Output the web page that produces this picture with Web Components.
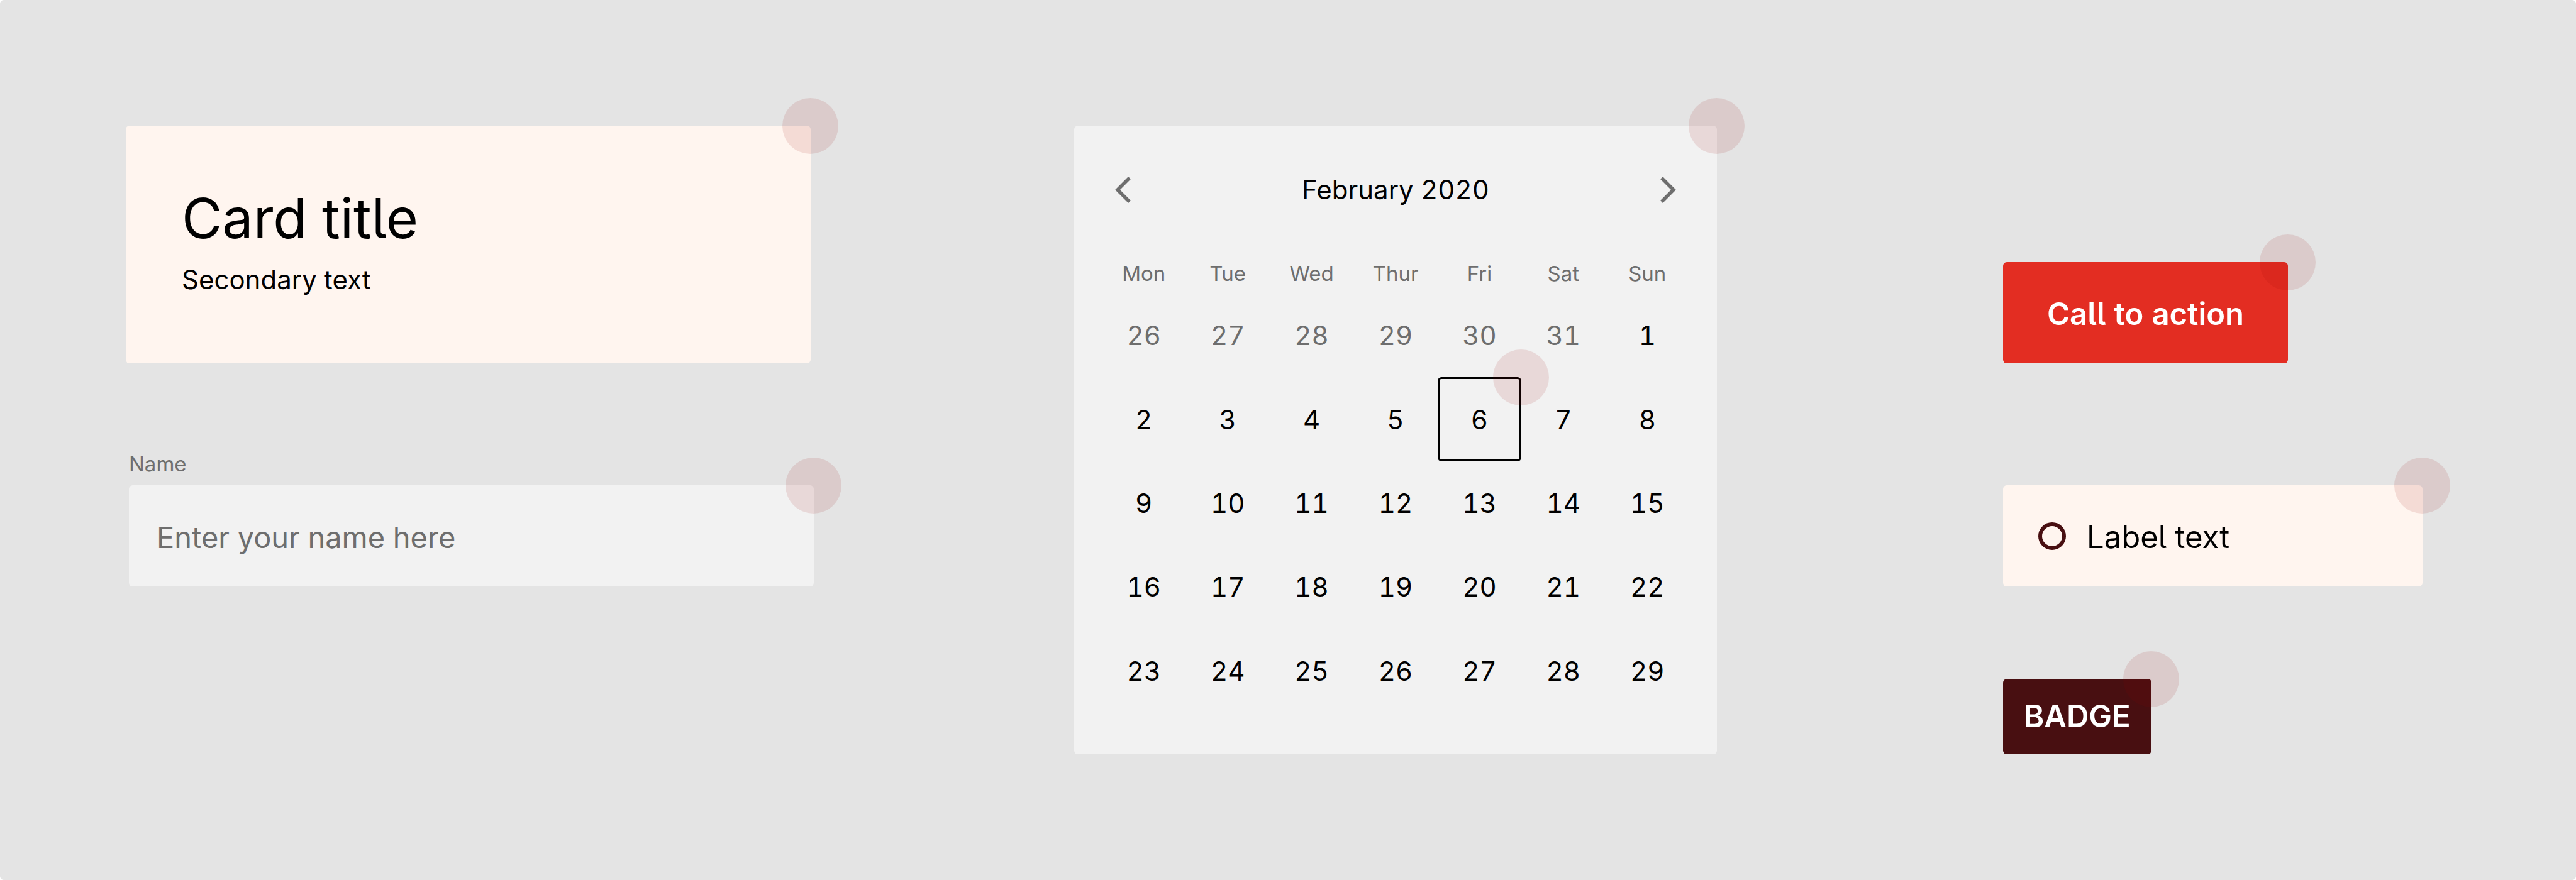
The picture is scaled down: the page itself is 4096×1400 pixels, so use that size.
<!DOCTYPE html>
<html lang="en">
<head>
<meta charset="utf-8">
<title>Corner radius</title>
<style>
  html { background: #fff; }
  body {
    margin: 0;
    font-family: Inter, "Liberation Sans", sans-serif;
    font-feature-settings: "cv05", "tnum";
    color: #000;
    --paper: #fff5ef;
    --surface: #f2f2f2;
    --canvas: #e4e4e4;
    --muted: #6e6e6e;
    --accent: #e32d22;
    --deep: #480f11;
    --radius: 6px;
    --size-s: 33px;
    --size-m: 42px;
    --size-input: 47px;
    --size-l: 49px;
    --size-xl: 88px;
  }
</style>
</head>
<body>
<ui-board>
  <ui-stack slot="forms">
    <ui-card><span slot="title">Card title</span>Secondary text</ui-card>
    <ui-field label="Name" placeholder="Enter your name here"></ui-field>
  </ui-stack>
  <ui-calendar slot="calendar" month="February 2020"></ui-calendar>
  <ui-stack slot="actions">
    <ui-button>Call to action</ui-button>
    <ui-radio>Label text</ui-radio>
    <ui-badge>BADGE</ui-badge>
  </ui-stack>
</ui-board>
<script>
const define = (name, html, setup) => {
  const template = document.createElement('template');
  template.innerHTML = '<style>*{box-sizing:border-box}</style>' + html;
  customElements.define(name, class extends HTMLElement {
    constructor() {
      super();
      this.attachShadow({ mode: 'open' }).append(template.content.cloneNode(true));
    }
    connectedCallback() { if (setup) setup(this, this.shadowRoot); }
  });
};

/* Translucent disc centred on the top right corner of its parent. */
define('corner-spot', `
  <style>
    :host { position: absolute; top: -44px; right: -44px; width: 89px; height: 89px;
      border-radius: 50%; background: rgb(150 0 0 / .105); pointer-events: none; z-index: 1; }
  </style>`);

define('ui-board', `
  <style>
    :host { display: grid; box-sizing: border-box; min-height: 100vh; align-items: start;
      grid-template-columns: 1094fr 414fr 1022fr 455fr 667fr;
      padding: 200px 244px 200px 200px; background: var(--canvas); border-radius: var(--radius); }
    slot[name=calendar]::slotted(*) { grid-column: 3; }
    slot[name=actions]::slotted(*) { grid-column: 5; padding-top: 217px; }
  </style>
  <slot name="forms"></slot><slot name="calendar"></slot><slot name="actions"></slot>`);

define('ui-stack', `
  <style>:host { display: flex; flex-direction: column; }</style>
  <slot></slot>`);

define('ui-card', `
  <style>
    :host { display: block; position: relative; margin-right: 5px; padding: 95px 89px 101px;
      background: var(--paper); border-radius: var(--radius); }
    h2 { margin: 0 0 14px; font-size: var(--size-xl); line-height: 104px; font-weight: 400; }
    p { margin: 0; font-size: var(--size-m); line-height: 64px; }
  </style>
  <h2><slot name="title"></slot></h2>
  <p><slot></slot></p>
  <corner-spot></corner-spot>`);

define('ui-field', `
  <style>
    :host { display: block; margin: 140px 0 0 5px; }
    label { display: block; margin-bottom: 14px; font-size: var(--size-s); line-height: 40px; color: var(--muted); }
    .box { position: relative; }
    input { display: block; width: 100%; height: 161px; padding: 4px 44px 0; border: 0;
      border-radius: var(--radius); background: var(--surface); color: #000;
      font: inherit; font-feature-settings: inherit; font-size: var(--size-input); }
    input::placeholder { color: var(--muted); opacity: 1; }
  </style>
  <label for="control"></label>
  <div class="box"><input id="control" type="text"><corner-spot></corner-spot></div>`,
  (host, root) => {
    root.querySelector('label').textContent = host.getAttribute('label');
    root.querySelector('input').placeholder = host.getAttribute('placeholder');
  });

define('ui-calendar', `
  <style>
    :host { display: block; position: relative; padding: 0 44px 66px;
      background: var(--surface); border-radius: var(--radius); }
    header { display: flex; align-items: center; justify-content: space-between; height: 203px; padding: 0 21px; }
    h3 { margin: 0; font-size: var(--size-m); font-weight: 400; }
    button { display: block; padding: 0; border: 0; background: none; color: var(--muted); }
    svg { display: block; }
    table { width: 100%; height: 731px; table-layout: fixed; border-collapse: separate; border-spacing: 0; }
    th, td { padding: 0; text-align: center; font-weight: 400; }
    th { height: 64px; font-size: var(--size-s); color: var(--muted); }
    td { position: relative; height: 133px; font-size: var(--size-m); }
    td.outside { color: var(--muted); }
    td[aria-selected] { border: 3px solid #000; border-radius: var(--radius); }
    td corner-spot { top: -47px; right: -47px; }
  </style>
  <header>
    <button type="button" aria-label="Previous month">
      <svg width="26" height="44" viewBox="0 0 26 44" fill="none" stroke="currentColor" stroke-width="5.5"><path d="M23 3 4 22l19 19"/></svg>
    </button>
    <h3></h3>
    <button type="button" aria-label="Next month">
      <svg width="26" height="44" viewBox="0 0 26 44" fill="none" stroke="currentColor" stroke-width="5.5"><path d="m3 3 19 19L3 41"/></svg>
    </button>
  </header>
  <table>
    <thead><tr><th>Mon</th><th>Tue</th><th>Wed</th><th>Thur</th><th>Fri</th><th>Sat</th><th>Sun</th></tr></thead>
    <tbody></tbody>
  </table>
  <corner-spot></corner-spot>`,
  (host, root) => {
    root.querySelector('h3').textContent = host.getAttribute('month');
    const days = [26, 27, 28, 29, 30, 31];
    for (let d = 1; d <= 29; d++) days.push(d);
    const body = root.querySelector('tbody');
    days.forEach((day, i) => {
      const row = i % 7 ? body.lastElementChild : body.insertRow();
      const cell = row.insertCell();
      cell.textContent = day;
      if (i < 6) cell.className = 'outside';
      if (i > 5 && day === 6) {
        cell.setAttribute('aria-selected', 'true');
        cell.append(document.createElement('corner-spot'));
      }
    });
  });

define('ui-button', `
  <style>
    :host { display: block; position: relative; align-self: flex-start; }
    button { display: block; height: 161px; padding: 4px 70px 0; border: 0; border-radius: var(--radius);
      background: var(--accent); color: #fff; font: inherit; font-feature-settings: inherit;
      font-size: var(--size-l); font-weight: 600; }
  </style>
  <button type="button"><slot></slot></button>
  <corner-spot></corner-spot>`);

define('ui-radio', `
  <style>
    :host { display: block; position: relative; margin-top: 194px; }
    label { display: flex; align-items: center; gap: 33px; height: 161px; padding: 0 56px;
      border-radius: var(--radius); background: var(--paper); font-size: var(--size-l); }
    input { appearance: none; flex: none; width: 44px; height: 44px; margin: 0;
      border: 6px solid var(--deep); border-radius: 50%; }
    span { padding-top: 4px; }
  </style>
  <label><input type="radio"><span><slot></slot></span></label>
  <corner-spot></corner-spot>`);

define('ui-badge', `
  <style>
    :host { display: block; position: relative; align-self: flex-start; margin-top: 147px; padding: 0 33px;
      border-radius: var(--radius); background: var(--deep); color: #fff;
      font-size: var(--size-l); line-height: 120px; font-weight: 600; }
  </style>
  <slot></slot>
  <corner-spot></corner-spot>`);
</script>
</body>
</html>
